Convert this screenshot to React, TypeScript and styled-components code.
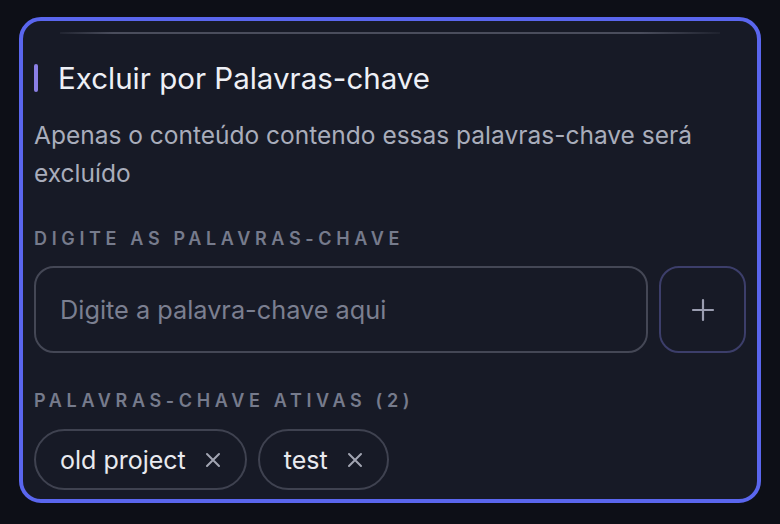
import React, { useState } from "react";
import styled, { createGlobalStyle } from "styled-components";

const GlobalStyle = createGlobalStyle`
  html, body {
    margin: 0;
    padding: 0;
    background: #0d0f17;
    font-family: Inter, "Noto Sans", sans-serif;
    -webkit-font-smoothing: antialiased;
  }
`;

const Page = styled.div`
  width: 780px;
  height: 524px;
  padding: 17px 19px 21px;
  box-sizing: border-box;
  overflow: hidden;
`;

const Card = styled.section`
  height: 100%;
  box-sizing: border-box;
  border: 4px solid #5a66ee;
  border-radius: 22px;
  background: #171a26;
  padding: 11px 11px 0 11px;
  overflow: hidden;
`;

const TopRule = styled.div`
  height: 2px;
  margin: 0 26px;
  background: linear-gradient(90deg, rgba(74, 77, 92, 0.2), #4a4d5c 8%, #4a4d5c 88%, rgba(74, 77, 92, 0.15));
`;

const TitleRow = styled.div`
  display: flex;
  align-items: center;
  gap: 20px;
  margin-top: 27px;
`;

const Accent = styled.span`
  width: 4px;
  height: 28px;
  border-radius: 2px;
  background: #8b7fe6;
`;

const Title = styled.h2`
  margin: 0;
  font-size: 29.5px;
  font-weight: 400;
  color: #eef0f6;
  line-height: 34px;
`;

const Description = styled.p`
  margin: 21px 0 0;
  font-size: 24.5px;
  line-height: 38px;
  color: #a9adbb;
`;

const Label = styled.div<{ $top: number }>`
  margin-top: ${(p) => p.$top}px;
  font-size: 18px;
  line-height: 22px;
  font-weight: 600;
  letter-spacing: 4.65px;
  color: #767b8c;
  text-transform: uppercase;
`;

const InputRow = styled.div`
  display: flex;
  gap: 11px;
  margin-top: 16px;
`;

const Field = styled.input`
  flex: 1;
  min-width: 0;
  height: 87px;
  box-sizing: border-box;
  border: 2px solid #444755;
  border-radius: 20px;
  background: transparent;
  padding: 0 24px;
  font-family: inherit;
  font-size: 25.3px;
  color: #e8e9ee;
  outline: none;
  &::placeholder {
    color: #7b7f90;
  }
`;

const AddButton = styled.button`
  width: 87px;
  height: 87px;
  flex: none;
  border: 2px solid #3c3e6a;
  border-radius: 20px;
  background: transparent;
  display: flex;
  align-items: center;
  justify-content: center;
  color: #9a9db0;
  padding: 0;
`;

const Chips = styled.div`
  display: flex;
  gap: 11px;
  margin-top: 17px;
`;

const Chip = styled.div`
  display: flex;
  align-items: center;
  gap: 19px;
  height: 61px;
  box-sizing: border-box;
  padding: 0 24px 0 24px;
  border: 2px solid #3f4250;
  border-radius: 31px;
  font-size: 25px;
  color: #e9eaef;
`;

const Remove = styled.span`
  display: flex;
  color: #a2a5b2;
`;

const PlusIcon = () => (
  <svg width="24" height="24" viewBox="0 0 24 24" fill="none" stroke="currentColor" strokeWidth="2.2" strokeLinecap="round">
    <path d="M12 2v20M2 12h20" />
  </svg>
);

const XIcon = () => (
  <svg width="16" height="16" viewBox="0 0 16 16" fill="none" stroke="currentColor" strokeWidth="2" strokeLinecap="round">
    <path d="M2 2l12 12M14 2L2 14" />
  </svg>
);

export default function App() {
  const [keywords] = useState(["old project", "test"]);

  return (
    <Page>
      <GlobalStyle />
      <Card>
        <TopRule />
        <TitleRow>
          <Accent />
          <Title>Excluir por Palavras-chave</Title>
        </TitleRow>
        <Description>
          Apenas o conteúdo contendo essas palavras-chave será excluído
        </Description>
        <Label $top={36}>Digite as palavras-chave</Label>
        <InputRow>
          <Field placeholder="Digite a palavra-chave aqui" />
          <AddButton aria-label="Adicionar">
            <PlusIcon />
          </AddButton>
        </InputRow>
        <Label $top={37}>Palavras-chave ativas ({keywords.length})</Label>
        <Chips>
          {keywords.map((k) => (
            <Chip key={k}>
              {k}
              <Remove>
                <XIcon />
              </Remove>
            </Chip>
          ))}
        </Chips>
      </Card>
    </Page>
  );
}
